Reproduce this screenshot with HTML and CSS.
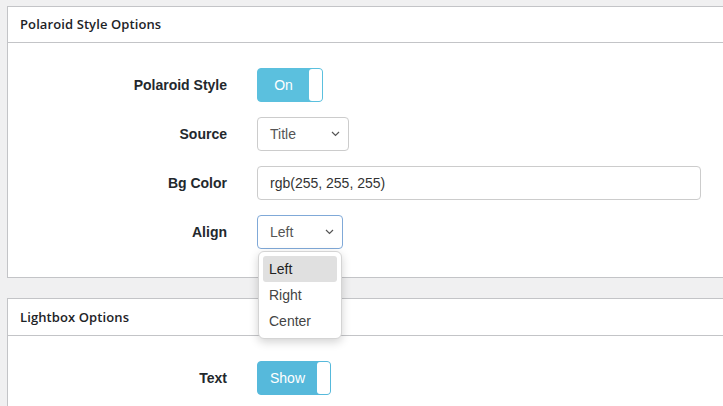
FILE: index.html
```html
<!DOCTYPE html>
<html lang="en">
<head>
  <meta charset="UTF-8" />
  <title>Gallery Settings</title>
  <link rel="stylesheet" href="styles.css">
</head>
<body>
  <div class="panel">
    <h2 class="panel-title">Polaroid Style Options</h2>
    <div class="panel-body">
      <div class="field">
        <label>Polaroid Style</label>
        <div class="switch">
          <span class="switch-text">On</span>
          <span class="knob"></span>
        </div>
      </div>
      <div class="field">
        <label>Source</label>
        <div class="select source">
          <span>Title</span>
          <svg width="9" height="6" viewBox="0 0 9 6"><path d="M1 1l3.5 3.5L8 1" fill="none" stroke="#555" stroke-width="1.2"/></svg>
        </div>
      </div>
      <div class="field">
        <label>Bg Color</label>
        <div class="text-input">rgb(255, 255, 255)</div>
      </div>
      <div class="field">
        <label>Align</label>
        <div class="select align focused">
          <span>Left</span>
          <svg width="9" height="6" viewBox="0 0 9 6"><path d="M1 1l3.5 3.5L8 1" fill="none" stroke="#555" stroke-width="1.2"/></svg>
          <ul class="dropdown">
            <li class="active">Left</li>
            <li>Right</li>
            <li>Center</li>
          </ul>
        </div>
      </div>
    </div>
  </div>

  <div class="panel">
    <h2 class="panel-title">Lightbox Options</h2>
    <div class="panel-body">
      <div class="field">
        <label>Text</label>
        <div class="switch wide">
          <span class="switch-text">Show</span>
          <span class="knob"></span>
        </div>
      </div>
    </div>
  </div>
</body>
</html>
```

FILE: styles.css
```css
body {
  margin: 0;
  padding: 6px 0 0 7px;
  background: #f0f0f1;
  font-family: 'Liberation Sans', Arial, sans-serif;
  color: #1d2327;
  overflow: hidden;
}
.panel {
  width: 780px;
  background: #fff;
  border: 1px solid #c3c4c7;
  margin-bottom: 20px;
}
.panel-title {
  margin: 0;
  height: 35px;
  line-height: 35px;
  padding-left: 12px;
  font-family: 'Open Sans', sans-serif;
  font-size: 13px;
  font-weight: 600;
  letter-spacing: 0.1px;
  border-bottom: 1px solid #c3c4c7;
}
.panel-body {
  padding: 25px 0 28px;
  display: flex;
  flex-direction: column;
  gap: 15px;
}
.panel + .panel .panel-title {
  height: 36px;
  line-height: 36px;
}
.field {
  display: grid;
  grid-template-columns: 219px auto;
  column-gap: 30px;
  align-items: center;
  justify-items: start;
}
.field label {
  justify-self: end;
  font-weight: bold;
  font-size: 14px;
  color: #23282d;
}
.switch {
  width: 66px;
  height: 34px;
  box-sizing: border-box;
  background: #5bc0de;
  border: 1px solid #5bc0de;
  border-radius: 4px;
  display: flex;
  align-items: stretch;
}
.switch.wide {
  width: 74px;
  background: #56b9db;
  border-color: #56b9db;
}
.switch-text {
  flex: 1;
  color: #fff;
  font-size: 14px;
  line-height: 32px;
  text-align: center;
}
.knob {
  width: 13px;
  background: #fff;
  border-radius: 3px;
}
.select {
  position: relative;
  height: 34px;
  box-sizing: border-box;
  border: 1px solid #ccc;
  border-radius: 4px;
  display: flex;
  align-items: center;
  justify-content: space-between;
  padding: 0 8px 0 12px;
  font-size: 14px;
  color: #555;
}
.select.source {
  width: 92px;
}
.select.align {
  width: 86px;
}
.select.focused {
  border-color: #80a9d8;
}
.text-input {
  width: 444px;
  height: 34px;
  box-sizing: border-box;
  border: 1px solid #ccc;
  border-radius: 4px;
  padding: 0 12px;
  line-height: 32px;
  font-size: 14px;
  color: #333;
}
.dropdown {
  position: absolute;
  top: 35px;
  left: 0;
  width: 84px;
  box-sizing: border-box;
  margin: 0;
  padding: 4px;
  list-style: none;
  background: #fff;
  border: 1px solid #d4d4d4;
  border-radius: 6px;
  box-shadow: 0 3px 10px rgba(0, 0, 0, 0.18);
  z-index: 2;
}
.dropdown li {
  height: 26px;
  line-height: 26px;
  padding-left: 6px;
  border-radius: 3px;
  color: #444;
}
.dropdown li.active {
  background: #e0e0e0;
  color: #222;
}
```
